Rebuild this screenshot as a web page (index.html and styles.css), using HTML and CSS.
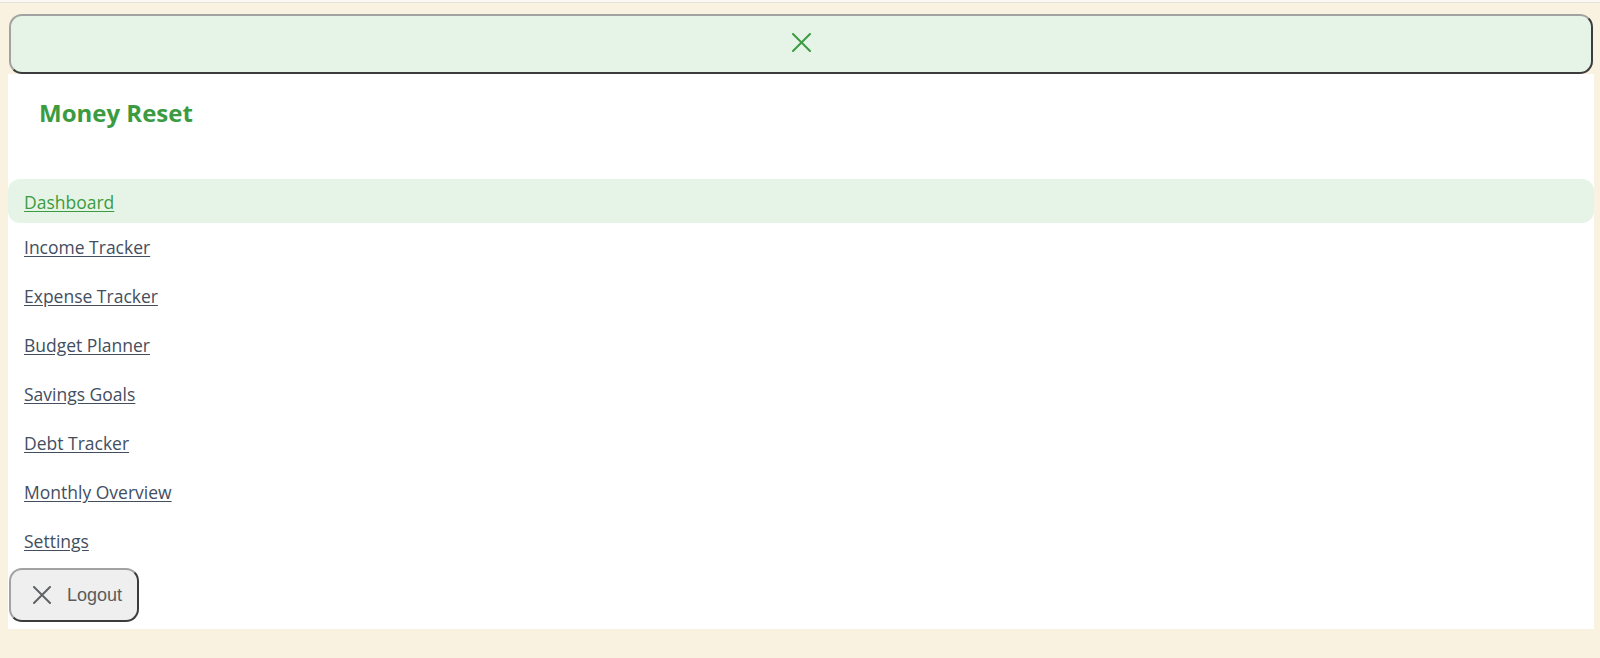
FILE: index.html
```html
<!DOCTYPE html>
<html lang="en">
<head>
<meta charset="utf-8">
<title>Money Reset</title>
<link rel="stylesheet" href="styles.css">
</head>
<body>
<div class="topline"></div>
<div class="shell">
  <button class="toggle" aria-label="Close menu">
    <svg class="toggle-icon" width="19" height="19" viewBox="0 0 19 19" aria-hidden="true">
      <path d="M1 1 L18 18 M18 1 L1 18" stroke="currentColor" stroke-width="2" stroke-linecap="round" fill="none"/>
    </svg>
  </button>
  <aside class="sidebar">
    <h1 class="brand">Money Reset</h1>
    <nav class="nav">
      <a class="nav-link active" href="#">Dashboard</a>
      <a class="nav-link" href="#">Income Tracker</a>
      <a class="nav-link" href="#">Expense Tracker</a>
      <a class="nav-link" href="#">Budget Planner</a>
      <a class="nav-link" href="#">Savings Goals</a>
      <a class="nav-link" href="#">Debt Tracker</a>
      <a class="nav-link" href="#">Monthly Overview</a>
      <a class="nav-link" href="#">Settings</a>
    </nav>
    <button class="logout">
      <svg class="logout-icon" width="20" height="18" viewBox="0 0 20 18" aria-hidden="true">
        <path d="M2 1 L18 17 M18 1 L2 17" stroke="currentColor" stroke-width="2" stroke-linecap="round" fill="none"/>
      </svg>
      <span>Logout</span>
    </button>
  </aside>
</div>
</body>
</html>
```

FILE: styles.css
```css
html {
  background: #faf2e1;
}

body {
  margin: 0;
  font-family: "Open Sans", "Noto Sans", sans-serif;
}

.topline {
  height: 2px;
  background: #fbf8f1;
  border-bottom: 1px solid #e2e2e0;
}

.shell {
  margin: 0 6px 0 8px;
  padding-top: 11px;
  padding-bottom: 30px;
}

.toggle {
  display: flex;
  align-items: center;
  justify-content: center;
  box-sizing: border-box;
  width: calc(100% - 2px);
  height: 60px;
  margin: 0 1px;
  padding: 0 0 4px 0;
  background: #e6f4e8;
  border: 2px solid;
  border-color: #a2a2a2 #3c3c3c #3c3c3c #a2a2a2;
  border-radius: 13px;
  color: #3c9b40;
  cursor: pointer;
}

.sidebar {
  background: #ffffff;
  padding: 24px 0 7px 0;
}

.brand {
  margin: 0 0 51px 31px;
  font-size: 24px;
  line-height: 30px;
  font-weight: 700;
  color: #3c9b40;
}

.nav {
  display: flex;
  flex-direction: column;
}

.nav-link {
  display: block;
  padding: 14px 16px;
  font-size: 17.5px;
  line-height: 21px;
  color: #434e60;
  text-decoration: underline;
  text-underline-offset: 2px;
}

.nav-link.active {
  padding: 13px 16px 10px 16px;
  background: #e6f4e8;
  border-radius: 12px;
  color: #3c9b40;
}

.logout {
  display: flex;
  align-items: center;
  gap: 15px;
  box-sizing: border-box;
  height: 54px;
  margin: 2px 0 0 1px;
  padding: 0 15px 0 21px;
  background: #efefef;
  border: 2px solid;
  border-color: #a2a2a2 #3c3c3c #3c3c3c #a2a2a2;
  border-radius: 13px;
  font-family: "Liberation Sans", Arial, sans-serif;
  font-size: 18px;
  color: #5b5b5b;
  cursor: pointer;
}

.logout-icon {
  color: #5f6368;
}
```
